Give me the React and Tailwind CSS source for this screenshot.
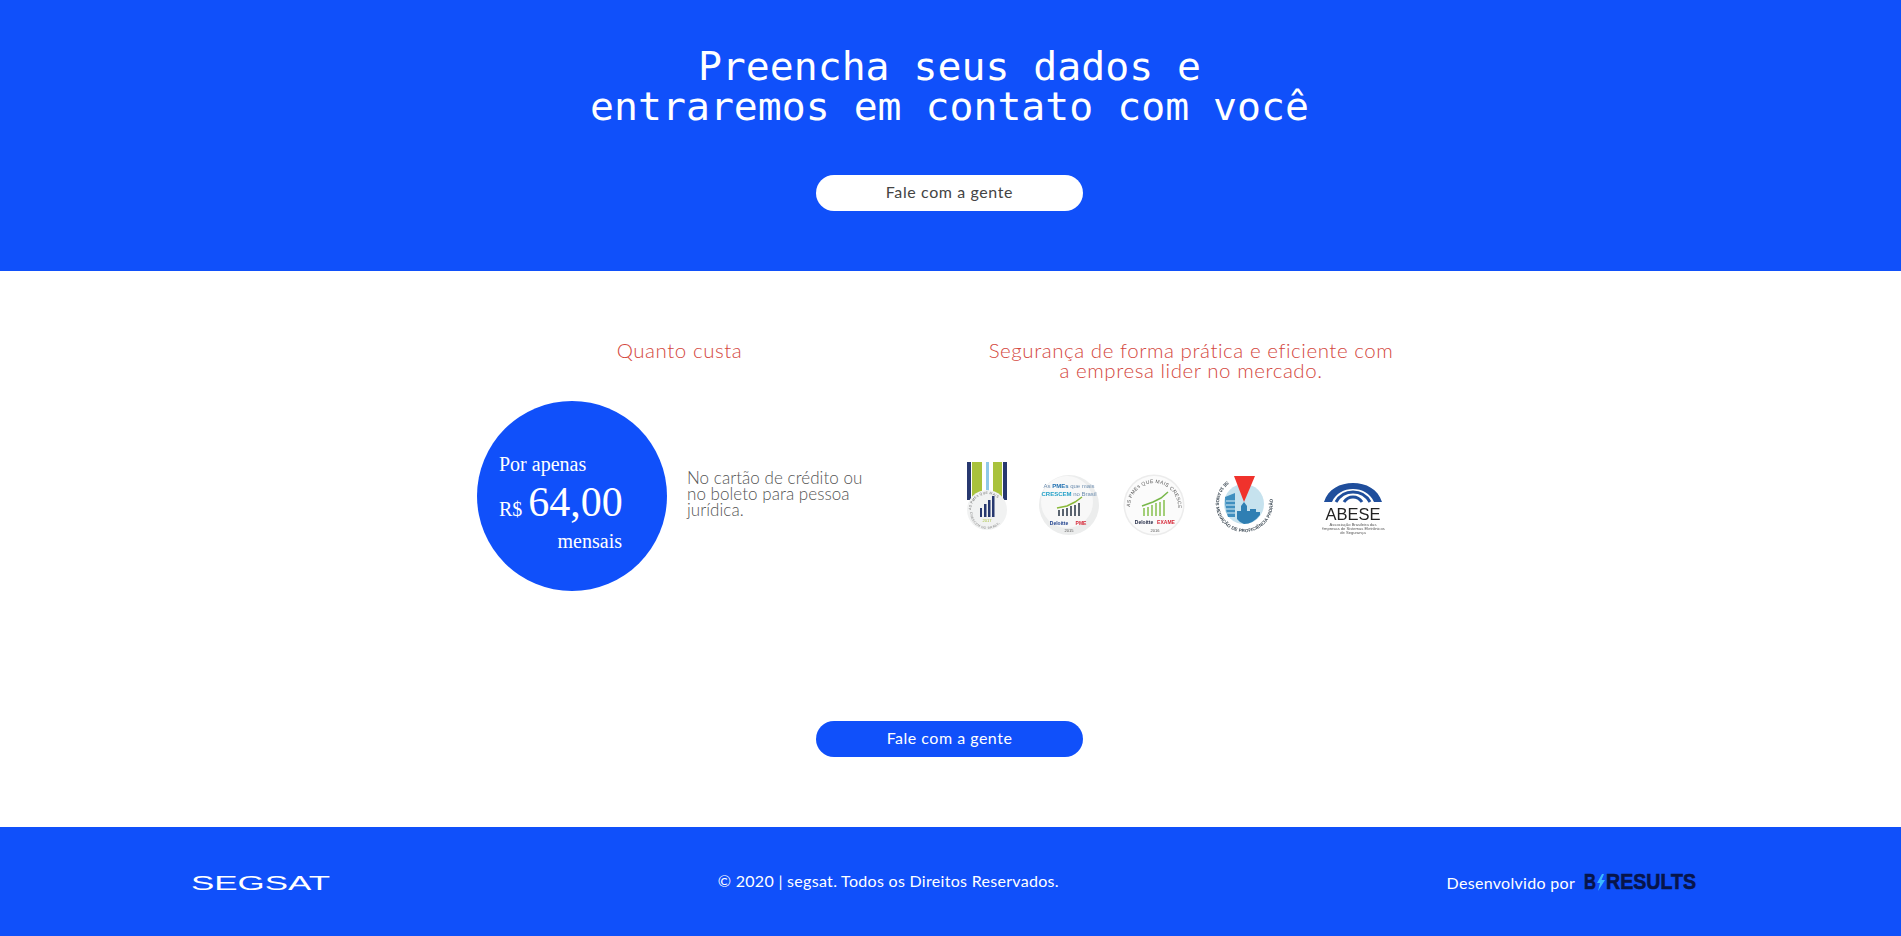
const raleway = "font-['Lato','Noto_Sans',sans-serif]";

function Badge1() {
  return (
    <svg width="45" height="75" viewBox="0 0 45 75" className="blur-[0.5px]">
      <rect x="2" y="0" width="4" height="38" fill="#27386f" />
      <rect x="7" y="0" width="10" height="38" fill="#a9c23c" />
      <rect x="21" y="0" width="3" height="38" fill="#8fc8e8" />
      <rect x="28" y="0" width="9" height="38" fill="#a9c23c" />
      <rect x="38" y="0" width="4" height="38" fill="#27386f" />
      <circle cx="22" cy="48" r="20" fill="#f1f2f2" />
      <path id="b1top" d="M6 48 A16 16 0 0 1 38 48" fill="none" />
      <text fontSize="3.4" fill="#666" fontFamily="Liberation Sans" letterSpacing="0.3"><textPath href="#b1top">AS PMEs QUE MAIS</textPath></text>
      <path id="b1bot" d="M5 50 A17 17 0 0 0 39 50" fill="none" />
      <text fontSize="3.4" fill="#888" fontFamily="Liberation Sans" letterSpacing="0.3"><textPath href="#b1bot">CRESCEM NO BRASIL</textPath></text>
      <rect x="15" y="46" width="2" height="9" fill="#27386f" />
      <rect x="19" y="42" width="2.5" height="13" fill="#27386f" />
      <rect x="23" y="38" width="2.5" height="17" fill="#27386f" />
      <rect x="27" y="34" width="2.5" height="21" fill="#27386f" />
      <text x="22" y="60" textAnchor="middle" fontSize="4" fill="#a9c23c" fontFamily="Liberation Sans">2017</text>
    </svg>
  );
}

function Badge2() {
  return (
    <svg width="62" height="75" viewBox="0 0 62 75" className="blur-[0.5px]">
      <circle cx="31" cy="43" r="30" fill="#eceded" />
      <circle cx="29" cy="40" r="26" fill="#f8f8f8" />
      <text x="31" y="26" textAnchor="middle" fontSize="6" fill="#6f8fb0" fontFamily="Liberation Sans">As <tspan fill="#1e6fb0" fontWeight="700">PMEs</tspan> que mais</text>
      <text x="31" y="34" textAnchor="middle" fontSize="6" fill="#22a0c8" fontFamily="Liberation Sans" fontWeight="700">CRESCEM <tspan fill="#6f8fb0" fontWeight="400">no Brasil</tspan></text>
      <g fill="#5a6470">
        <rect x="20" y="48" width="2" height="6" /><rect x="24" y="47" width="2" height="7" /><rect x="28" y="46" width="2" height="8" />
        <rect x="32" y="44" width="2" height="10" /><rect x="36" y="43" width="2" height="11" /><rect x="40" y="41" width="2" height="13" />
      </g>
      <path d="M19 46 L29 44 L37 40 L44 35" stroke="#8ab93a" strokeWidth="1.5" fill="none" />
      <text x="21" y="63" textAnchor="middle" fontSize="5" fill="#1c3f8c" fontWeight="700" fontFamily="Liberation Sans">Deloitte</text>
      <text x="43" y="63" textAnchor="middle" fontSize="5" fill="#d62838" fontWeight="700" fontFamily="Liberation Sans">PME</text>
      <text x="31" y="70" textAnchor="middle" fontSize="4" fill="#555" fontFamily="Liberation Sans">2015</text>
    </svg>
  );
}

function Badge3() {
  return (
    <svg width="62" height="75" viewBox="0 0 62 75" className="blur-[0.5px]">
      <circle cx="31" cy="43" r="30.5" fill="#ececec" />
      <circle cx="31" cy="43" r="29" fill="#fbfbfb" />
      <path id="b3arc" d="M7 45 A24 24 0 0 1 55 45" fill="none" />
      <text fontSize="5" fill="#555" fontFamily="Liberation Sans" letterSpacing="0.3"><textPath href="#b3arc">AS PMEs QUE MAIS CRESCEM NO BRASIL</textPath></text>
      <g fill="#a3cf78">
        <rect x="20" y="46" width="2" height="8" /><rect x="24" y="45" width="2" height="9" /><rect x="28" y="43" width="2" height="11" />
        <rect x="32" y="41" width="2" height="13" /><rect x="36" y="40" width="2" height="14" /><rect x="40" y="38" width="2" height="16" />
      </g>
      <path d="M19 44 L30 40 L38 36 L45 30" stroke="#78b84a" strokeWidth="1.5" fill="none" />
      <text x="21" y="62" textAnchor="middle" fontSize="5" fill="#1c2440" fontWeight="700" fontFamily="Liberation Sans">Deloitte</text>
      <text x="43" y="62" textAnchor="middle" fontSize="5" fill="#d62838" fontWeight="700" fontFamily="Liberation Sans">EXAME</text>
      <text x="32" y="70" textAnchor="middle" fontSize="4" fill="#555" fontFamily="Liberation Sans">2016</text>
    </svg>
  );
}

function Badge4() {
  return (
    <svg width="62" height="75" viewBox="0 0 62 75" className="blur-[0.4px]">
      <circle cx="31" cy="42" r="20" fill="#c6e2ee" />
      <path id="b4arc" d="M14 19 A28.5 28.5 0 1 0 50 20" fill="none" />
      <text fontSize="4.6" fontWeight="700" fill="#3d4a55" fontFamily="Liberation Sans" letterSpacing="0.1"><textPath href="#b4arc">SE 10 ANOS MEDIAÇÃO DE PROFICIÊNCIA PADRÃO</textPath></text>
      <path d="M12 35 L22 31 V55 H15 Q12 47 12 35 Z" fill="#3f8fbf" />
      <path d="M13 39 H22 M13 43 H22 M13 47 H22 M14 51 H22" stroke="#dceef6" strokeWidth="1" />
      <path d="M24 57 V49 H28 V44 L31 40 L34 44 V49 H37 V47 H43 V50 H47 V53 Q40 62 31 62 Q27 61 24 57 Z" fill="#2f7fb3" />
      <path d="M21 14 H42 L31 40 Z" fill="#f0322c" />
    </svg>
  );
}

function Badge5() {
  return (
    <svg width="63" height="75" viewBox="0 0 63 75" className="blur-[0.4px]">
      <g fill="none" stroke="#1f4e9c">
        <path d="M2 40 C6 27 18 21 31 21 C44 21 56 27 60 40 L52 40 C48 31 40 27 31 27 C22 27 14 31 10 40 Z" fill="#1f4e9c" stroke="none" />
        <path d="M14 40 C18 33 24 30 31 30 C38 30 44 33 48 40" strokeWidth="3" />
        <path d="M22 40 C24 37 27 35 31 35 C35 35 38 37 40 40" strokeWidth="3" />
      </g>
      <text x="31" y="58" textAnchor="middle" fontSize="16.5" fill="#222" fontFamily="Liberation Sans">ABESE</text>
      <g fontSize="4.1" fill="#555" fontFamily="Liberation Sans" textAnchor="middle">
        <text x="31" y="64">Associação Brasileira das</text>
        <text x="31" y="68">Empresas de Sistemas Eletrônicos</text>
        <text x="31" y="72">de Segurança</text>
      </g>
    </svg>
  );
}

function SegsatLogo() {
  return (
    <svg width="139" height="24" viewBox="0 0 139 24">
      <text x="0" y="19.5" fontSize="21" fontFamily="Liberation Sans" fill="#ffffff" textLength="139" lengthAdjust="spacingAndGlyphs">SEGSAT</text>
    </svg>
  );
}

function ResultsLogo() {
  return (
    <svg width="113" height="24" viewBox="0 0 113 24" className="-mt-[1px]">
      <text x="0" y="19" fontSize="21.5" fontWeight="700" fontFamily="Liberation Sans" fill="#07144a" stroke="#07144a" strokeWidth="0.6" textLength="12" lengthAdjust="spacingAndGlyphs">B</text>
      <path d="M18 4 L13 13 H16 L14 21 L21 10 H17.5 L20 4 Z" fill="#3cb8ff" />
      <text x="22" y="19" fontSize="21.5" fontWeight="700" fontFamily="Liberation Sans" fill="#07144a" stroke="#07144a" strokeWidth="0.6" textLength="90" lengthAdjust="spacingAndGlyphs">RESULTS</text>
    </svg>
  );
}

export default function App() {
  return (
    <div className={`w-full min-h-[936px] bg-white flex flex-col ${raleway}`}>
      <section className="h-[271px] bg-[#1050fa] flex flex-col items-center pt-[46px] pr-[2px]">
        <h1 className="font-['DejaVu_Sans_Mono',monospace] text-[39.8px] leading-[40px] text-white text-center font-normal">
          Preencha seus dados e<br />entraremos em contato com você
        </h1>
        <button className="mt-[49px] w-[267px] h-[36px] pb-[2px] rounded-[18px] bg-white text-[#444] text-[16px] font-normal tracking-[0.6px]">Fale com a gente</button>
      </section>

      <main className="h-[556px] flex flex-col items-center pt-[69px] pr-[2px]">
        <div className="w-[947px] flex gap-[76px] ml-[2px]">
          <div className="w-[405px] shrink-0">
            <h2 className="text-[20.5px] leading-[20px] text-[#d4483e] text-center font-light tracking-[0.55px]">Quanto custa</h2>
            <div className="mt-[41px] flex items-center gap-[20px]">
              <div className="w-[190px] h-[190px] shrink-0 rounded-full bg-[#1050fa] text-white font-['Liberation_Serif',serif] pl-[22px] pr-[45px] pt-[52px]">
                <p className="text-[20px] leading-[22px]">Por apenas</p>
                <p className="mt-[4px] flex items-baseline gap-[6px] leading-[46px]">
                  <span className="text-[20px]">R$</span>
                  <span className="text-[42px]">64,00</span>
                </p>
                <p className="text-[20px] leading-[22px] -mt-[2px] text-right">mensais</p>
              </div>
              <p className="w-[190px] -mt-[4px] text-[17px] leading-[16.3px] text-[#555] font-light tracking-[0.05px]">
                No cartão de crédito ou no boleto para pessoa jurídica.
              </p>
            </div>
          </div>
          <div className="w-[466px] shrink-0">
            <h2 className="text-[20.5px] leading-[20px] text-[#d4483e] text-center font-light tracking-[0.55px]">
              Segurança de forma prática e eficiente com<br />a empresa lider no mercado.
            </h2>
            <div className="mt-[82px] ml-[7px] flex">
              <Badge1 />
              <div className="ml-[28px]"><Badge2 /></div>
              <div className="ml-[23px]"><Badge3 /></div>
              <div className="ml-[28px]"><Badge4 /></div>
              <div className="ml-[47px]"><Badge5 /></div>
            </div>
          </div>
        </div>
        <button className="mt-[130px] w-[267px] h-[36px] pb-[2px] shrink-0 rounded-[18px] bg-[#1050fa] text-white text-[16px] tracking-[0.5px]">Fale com a gente</button>
      </main>

      <footer className="h-[109px] bg-[#1050fa] flex items-center justify-between pl-[191px] pr-[204px] text-white text-[16px]">
        <SegsatLogo />
        <p className="tracking-[0.3px] -mt-[2px]">© 2020 | segsat. Todos os Direitos Reservados.</p>
        <div className="flex items-center gap-[9px] mt-[2px]">
          <span className="tracking-[0.3px]">Desenvolvido por</span>
          <ResultsLogo />
        </div>
      </footer>
    </div>
  );
}
